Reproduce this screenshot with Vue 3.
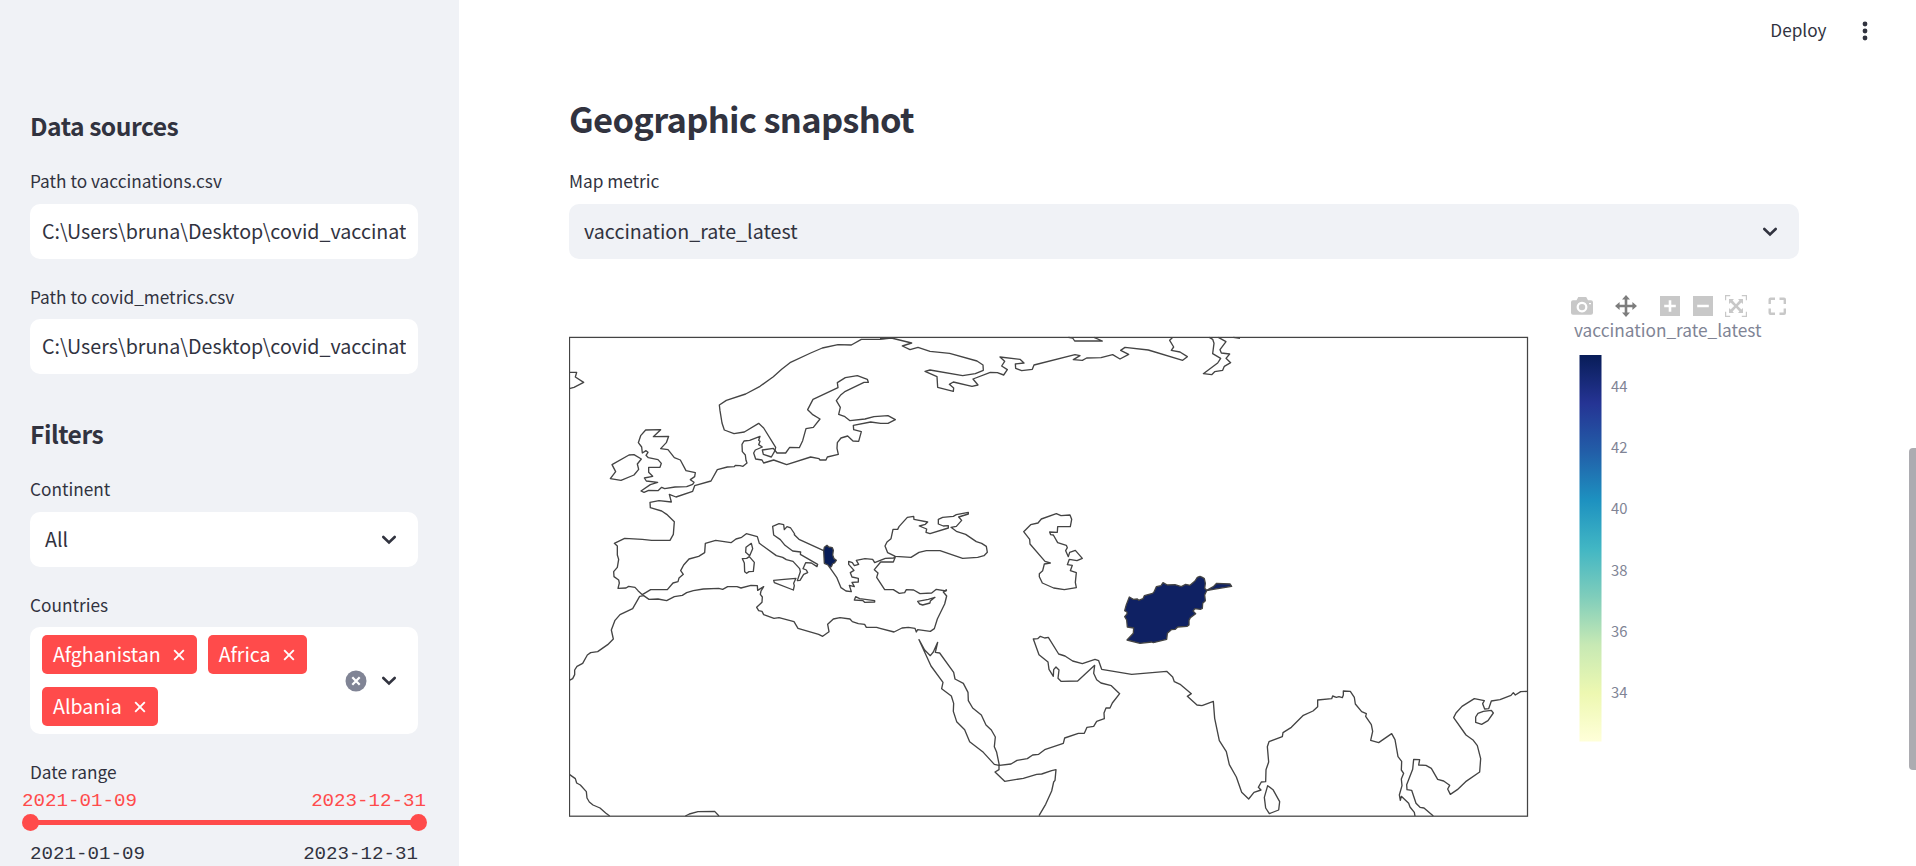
<script setup>
const countries = ['Afghanistan', 'Africa', 'Albania']
const ticks = [44, 42, 40, 38, 36, 34]
const stops = ['#081d58', '#253494', '#225ea8', '#1d91c0', '#41b6c4', '#7fcdbb', '#c7e9b4', '#edf8b1', '#ffffd9']

// Coastlines, grouped in map tiles; every tile has its own origin and a 3:1 grid.
const tiles = [
  { x: 560, y: 325, lines: [
    'M28 142L50 142 46 156 71 172 42 187 28 191',
    'M994 39L960 43 904 43 874 60 834 59 787 69 752 84 690 113 665 133 640 155 600 184 557 207 499 226 478 240 480 257 486 294 493 315 522 326 553 321 596 295 611 309 647 367 645 376 651 384 677 384 689 367 718 368 728 347 738 311 760 307 780 282 757 268 743 254 759 223 834 188 832 173 856 158 892 152 922 163 925 172 912 172 856 199 843 209 829 227 841 247 836 268 853 274 870 287 915 282 942 275 984 272 1006 284 984 295 962 295 932 291 880 301 881 314 904 320 896 349 879 348 863 333 843 339 832 353 831 370 835 388 802 396 798 405 780 405 777 401 752 396 680 419 641 405 611 414 606 405 587 402 581 384 586 375 607 366 596 359 600 349 596 346 600 334 569 346 552 348 546 358 547 380 556 390 558 406 561 414 549 424 540 422 526 421 523 425 502 426 472 434 453 468 404 482 398 499 348 516 328 508 334 531 297 527 270 532 271 548 305 558 320 568 343 590 340 628 330 646 275 646 247 643 194 640 163 655 172 663 172 690 176 703 172 727 161 740 162 755 176 765 178 774 174 790 198 789 206 784 225 787 234 797 247 809 272 794 322 794 339 774 354 770 357 759 370 748 362 737 371 720 387 702 416 694 434 683 436 655 467 646 513 653 528 642 545 637 559 626 592 635 598 655 649 692 668 697 679 704 699 709 719 731 721 740 712 767 720 766 731 748 743 743 739 735 729 731 737 713 754 714 771 725 773 718 721 688 722 681 698 678 675 661 661 644 641 630 638 604 657 596 671 599 673 614 681 605 692 609 704 627 703 629 717 643 791 677',
    'M809 727L830 757 843 788 858 798 874 800 868 781 883 785 876 772 895 771 895 760 876 756 871 743 882 736 866 718 866 709 877 713 883 722 896 718 889 706 915 701 938 703 944 713 976 700 1001 699 1006 694',
    'M1006 696L1000 711 962 711 943 734 954 744 950 757 974 794 1000 794 1018 805 1034 803 1039 794 1061 795 1080 806 1115 804 1129 793 1158 798 1160 794',
    'M257 315L302 314 280 335 326 334 319 353 302 371 324 374 343 398 361 405 378 437 406 443 404 455 391 464 402 472 398 478 380 485 345 486 314 491 305 487 294 497 266 496 252 502 243 498 271 479 293 472 259 468 253 459 278 454 266 442 266 427 300 427 304 415 294 404 265 398 258 391 264 382 258 377 247 384 245 366 235 353 242 332Z',
    'M207 390L222 389 244 402 232 417 236 433 222 450 183 466 151 461 167 440 156 419Z',
    'M607 375L640 370 645 377 634 396 610 388Z',
    'M574 655L578 671 569 692 557 682 558 667Z',
    'M568 695L583 712 580 739 567 740 560 745 554 740 553 714 547 701 560 700Z',
    'M641 766L672 763 708 760 701 775 703 782 700 795 643 773Z'
  ] },
  { x: 880, y: 325, lines: [
    'M0 41L34 39 95 54 67 63 90 74 114 67 150 79 209 85 291 108 309 120 310 136 286 146 248 152 150 135 135 139 171 155 173 187 220 199 221 189 208 178 220 171 276 184 294 180 279 162 331 142 352 143 371 150 382 134 365 123 374 109 360 96 420 103 432 114 406 117 407 130 425 137 457 133 462 120 585 89 600 92 580 104 607 106 620 99 663 98 698 89 720 102 746 88 722 76 735 67 805 75 908 106 922 95 900 81 874 76 881 66 869 46 877 38',
    'M565 37L578 39 584 48 667 48 642 37',
    'M46 694L23 683 15 663 21 651 33 641 39 613 53 613 57 605 82 577 101 574 102 583 143 591 136 598 118 603 140 612 138 622 150 626 205 609 205 602 190 603 175 597 175 583 188 577 220 574 229 569 265 562 265 567 236 576 245 586 229 604 213 607 229 619 257 628 289 650 305 655 319 664 322 682 312 692 293 697 248 700 180 677 139 677 117 682 93 697Z',
    'M529 566L543 572 570 570 575 583 571 605 533 605 532 622 509 621 512 629 520 630 533 653 559 661 562 668 557 677 565 695 569 682 586 676 607 700 591 707 568 703 562 719 577 721 571 737 589 743 586 772 589 788 553 794 521 789 487 774 478 755 478 746 488 737 493 717 511 714 495 709 450 657 449 643 431 620 452 599 474 594 484 582Z'
  ] },
  { x: 1200, y: 325, lines: [
    'M28 37L38 43 42 55 38 86 62 100 53 114 10 146 35 149 44 140 68 136 73 124 92 113 78 100 89 87 64 84 60 74 78 50 55 37',
    'M100 37L120 40'
  ] },
  { x: 560, y: 580, lines: [
    'M960 145L950 142 919 142 914 133 895 131 877 125 870 117 840 113 820 117 803 133 807 155 788 169 776 163 714 145 702 125 657 113 642 115 611 104 606 94 596 92 590 82 606 67 607 51 601 43 603 33 611 20 593 31 592 17 573 16 543 24 531 20 503 20 488 28 476 25 430 27 400 32 380 38 367 46 343 50 320 62 294 57 267 58 251 47 239 49 218 86 180 104 165 121 154 150 160 177 143 194 113 215 92 218 82 225 68 250 51 259 44 270 44 284 38 296 28 301',
    'M887 50L899 56 944 62 944 66 914 67 909 62 883 60Z',
    'M28 583L46 596 50 609 61 615 79 635 81 654 88 666 99 675 120 684 137 699 149 708',
    'M376 708L388 702 414 695 464 694 477 708'
  ] },
  { x: 880, y: 580, lines: [
    'M200 29L190 36 200 48 194 72 172 117 163 146 151 154 113 149 109 156 105 145 85 142 66 144 42 156 0 145',
    'M113 64L145 58 165 52 151 63 150 69 128 75 119 72Z',
    'M357 556L343 553 310 517 269 485 254 449 230 425 220 394 221 370 214 348 185 326 189 307 153 258 117 179 134 210 151 227 160 216 173 187 166 217 179 219 221 277 225 297 250 310 264 337 265 362 278 384 304 405 318 435 334 450 346 471 343 500 350 517 358 556 393 552 411 541 442 536 458 525 476 523 494 509 550 490 554 474 595 460 613 460 621 442 641 439 650 424 673 416 672 399 678 384 690 384 697 369 719 341 694 317 663 309 650 299 641 280 644 256 593 303 543 304 534 295 537 270 528 261 521 269 520 289 507 268 504 246 477 224 460 177 473 176 481 169 494 174 505 172 536 222 555 228 578 243 607 251 645 238 656 242 665 268 755 283 860 274 878 291 883 305 902 314 934 341 922 349 951 375 966 377',
    'M357 556L357 569 345 576 374 604 430 595 470 583 485 582 515 572 528 569 525 601 521 606 515 633 497 673 477 707'
  ] },
  { x: 1200, y: 580, lines: [
    'M6 377L40 364 44 415 58 482 79 515 88 554 109 591 125 637 146 657 162 637 183 630 175 622 184 606 197 605 198 569 206 546 202 500 207 485 247 470 249 458 274 442 310 406 339 393 353 380 353 360 395 356 398 348 409 352 417 350 427 353 430 345 430 333 451 334 463 352 466 372 485 395 499 401 497 409 514 434 518 454 512 481 536 488 575 461 585 479 594 530 605 544 604 570 611 580 604 597 606 617 598 645 601 661 604 649 626 670 630 681 643 697 645 708',
    'M700 708L672 684 660 682 648 670 635 631 621 629 620 614 638 568 641 538 659 539 656 555 678 556 694 565 713 598 731 603 749 616 743 627 751 643 772 629 797 605 839 576 842 536 832 497 820 481 798 465 761 413 768 399 786 379 823 356 853 362 848 371 854 387 866 386 874 363 900 359 933 346 940 338 946 345 962 335 982 334',
    'M850 394L874 391 880 399 864 422 845 433 827 427 827 411 834 400Z',
    'M203 617L219 629 239 665 236 690 208 701 197 684 193 652Z'
  ] }
]
</script>

<template>
  <div class="app">
    <aside class="sidebar">
      <h3>Data sources</h3>
      <label>Path to vaccinations.csv</label>
      <div class="field input"><span>C:\Users\bruna\Desktop\covid_vaccinat</span></div>
      <label class="gap short">Path to covid_metrics.csv</label>
      <div class="field input"><span>C:\Users\bruna\Desktop\covid_vaccinat</span></div>
      <h3 class="second">Filters</h3>
      <label>Continent</label>
      <div class="field select">
        <span>All</span>
        <svg class="chev" viewBox="0 0 20 20"><path d="M4.3 7l5.7 5.5L15.7 7" /></svg>
      </div>
      <label class="gap short">Countries</label>
      <div class="field multi">
        <div class="tags">
          <div v-for="c in countries" :key="c" class="tag">
            <span>{{ c }}</span>
            <svg viewBox="0 0 12 12"><path d="M1.2 1.2l9.6 9.6M10.8 1.2l-9.6 9.6" /></svg>
          </div>
        </div>
        <svg class="clear" viewBox="0 0 22 22"><circle cx="11" cy="11" r="10.5" /><path d="M7.3 7.3l7.4 7.4M14.7 7.3l-7.4 7.4" /></svg>
        <svg class="chev" viewBox="0 0 20 20"><path d="M4.3 7l5.7 5.5L15.7 7" /></svg>
      </div>
      <label class="gap range-label">Date range</label>
      <div class="dates current"><span>2021-01-09</span><span>2023-12-31</span></div>
      <div class="slider"><i></i><b></b><i></i></div>
      <div class="dates"><span>2021-01-09</span><span>2023-12-31</span></div>
    </aside>

    <main class="main">
      <header>
        <span>Deploy</span>
        <svg viewBox="0 0 6 20"><circle cx="3" cy="3" r="2.4" /><circle cx="3" cy="10" r="2.4" /><circle cx="3" cy="17" r="2.4" /></svg>
      </header>
      <section class="content">
        <h2>Geographic snapshot</h2>
        <label>Map metric</label>
        <div class="field select grey">
          <span>vaccination_rate_latest</span>
          <svg class="chev" viewBox="0 0 20 20"><path d="M4.3 7l5.7 5.5L15.7 7" /></svg>
        </div>
        <div class="modebar">
          <svg viewBox="0 0 22 22"><path fill-rule="evenodd" d="M2 5.3h3.5L7.3 2h7.9l1.8 3.3h3q2 0 2 2v10.4q0 2-2 2H2q-2 0-2-2V7.3q0-2 2-2zM11 6.7a5.4 5.4 0 1 0 .01 0zM18 8v1.2h2V8z" /><circle cx="11" cy="12.1" r="3.2" /></svg>
          <svg class="active" viewBox="0 0 22 22"><path d="M11 0l4 4.6h-2.700v5.100h5.100V7L22 11l-4.600 4v-2.700h-5.100v5.100H15L11 22l-4-4.600h2.700v-5.100H4.600V15L0 11l4.600-4v2.700h5.100V4.600H7z" /></svg>
          <svg viewBox="0 0 22 22"><path fill-rule="evenodd" d="M1 1h20v20H1zM9.7 5.3v4.4H5.2v2.6h4.5v4.4h2.6v-4.4h4.5V9.7h-4.5V5.3z" /></svg>
          <svg viewBox="0 0 22 22"><path fill-rule="evenodd" d="M1 1h20v20H1zM5.2 9.7v2.6h11.6V9.7z" /></svg>
          <svg viewBox="0 0 22 22"><path d="M0 0h5.2v1.2H1.2v4H0zM16.8 0H22v5.2h-1.2v-4h-4zM0 16.8h1.2v4h4V22H0zM20.8 16.8H22V22h-5.2v-1.2h4zM4 4h5L7.6 5.600l3.400 3.600 3.400-3.600L13 4h5v5l-1.600-1.400L12.800 11l3.600 3.400L18 13v5h-5l1.400-1.600L11 12.800l-3.400 3.600L9 18H4v-5l1.600 1.400L9.200 11 5.600 7.600 4 9z" /></svg>
          <svg class="full" viewBox="0 0 22 22"><path d="M3.700 9V4.500q0-.8.8-.8H9M13.500 3.700H18q.8 0 .8.8V9M18.800 13.500V18q0 .8-.8.8h-4.500M9 18.800H4.500q-.8 0-.8-.8v-4.500" /></svg>
        </div>
        <svg class="chart" viewBox="569 317 1230 549">
          <defs>
            <linearGradient id="scale" x1="0" y1="0" x2="0" y2="1">
              <stop v-for="(c, i) in stops" :key="c" :offset="i / 8" :stop-color="c" />
            </linearGradient>
          </defs>
          <g v-for="t in tiles" :key="t.x + '-' + t.y" class="coast" :transform="`translate(${t.x} ${t.y}) scale(.33333)`">
            <path v-for="(d, i) in t.lines" :key="i" :d="d" />
          </g>
          <g class="coast country" transform="translate(880 580) scale(.33333)">
            <path d="M748 51L760 58 772 57 776 61 789 56 793 47 818 40 823 34 829 20 843 17 849 8 862 15 885 14 904 20 917 13 930 16 945 3 952 -8 960 -11 967 -8 973 -4 976 10 974 25 980 31 1000 20 1010 10 1050 12 1055 19 1000 28 980 32 974 45 976 62 968 70 967 85 961 88 945 86 939 93 947 101 931 113 927 121 927 135 921 139 893 141 886 148 874 149 862 160 860 178 820 188 815 186 780 190 741 180 760 160 761 144 742 141 740 120 734 110 741 102 741 96 734 92 739 74Z" />
          </g>
          <g class="coast country" transform="translate(560 325) scale(.33333)">
            <path class="dark" d="M791 677L793 667 801 661 806 666 817 668 820 676 818 690 822 701 829 706 823 714 818 716 814 725 809 727 804 720 793 715Z" />
          </g>
          <rect class="frame" x="569.5" y="337.400" width="958" height="478.800" />
          <text class="legend" x="1574" y="337" textLength="187.500">vaccination_rate_latest</text>
          <rect x="1579.500" y="355" width="22" height="386.500" fill="url(#scale)" />
          <text v-for="(n, i) in ticks" :key="n" class="tick" x="1611" :y="392 + i * 61.200" textLength="16.500">{{ n }}</text>
        </svg>
      </section>
      <div class="scroll"></div>
    </main>
  </div>
</template>

<style>
html, body { overflow: hidden; }
</style>

<style scoped>
* { box-sizing: border-box; }
.app { display: flex; width: 1916px; height: 866px; overflow: hidden; background: #fff; color: #31333f; font-family: "Noto Sans CJK SC", "Noto Sans", sans-serif; font-size: 19.65px; }
.sidebar { width: 459px; height: 866px; flex: none; background: #f0f2f6; padding: 107px 41px 0 30px; overflow: hidden; }
h2, h3 { margin: 0; font-weight: 700; white-space: nowrap; }
h3 { font-size: 24.65px; line-height: 36px; height: 36px; letter-spacing: -.5px; }
h3.second { margin-top: 41px; margin-bottom: 26px; }
label { display: block; height: 24px; line-height: 24px; margin: 26px 0 11px; font-size: 17.250px; }
label.gap { margin-top: 26px; }
label.short { margin-bottom: 10px; }
label.range-label { margin-bottom: 5px; }
.field { height: 55px; border-radius: 10px; background: #fff; display: flex; align-items: center; white-space: nowrap; }
.input { padding: 0 12px; }
.input span { overflow: hidden; flex: 1; }
.input span, .select span, .tag span { padding-bottom: 2px; }
.select { padding: 0 19px 0 15px; justify-content: space-between; }
.grey { background: #f0f2f6; }
.chev { width: 20px; height: 20px; fill: none; stroke: #31333f; stroke-width: 2.600; stroke-linecap: round; flex: none; }
.multi { height: 107px; padding: 0 19px 0 12px; }
.tags { flex: 1; display: flex; flex-wrap: wrap; gap: 13px 11px; }
.tag { height: 39px; border-radius: 5px; background: #ff4b4b; color: #fff; display: flex; align-items: center; gap: 12.500px; padding: 0 11.500px 0 11px; }
.tag span { font-size: 19.600px; }
.tag svg { width: 12px; height: 12px; stroke: #fff; stroke-width: 1.900; }
.clear { width: 22px; height: 22px; margin-right: 12px; fill: #808495; }
.clear path { stroke: #fff; stroke-width: 2.200; }
.dates { display: flex; justify-content: space-between; height: 22px; line-height: 22px; font-family: "Liberation Mono", monospace; font-size: 19.150px; }
.current { color: #ff4b4b; margin: 0 -8px; height: 24px; line-height: 24px; }
.slider { display: flex; align-items: center; height: 17px; margin: 1px -9px 12px -8px; }
.slider i { width: 17px; height: 17px; border-radius: 50%; background: #ff4b4b; }
.slider b { flex: 1; height: 5px; margin: 0 -2px; background: #ff4b4b; }
.main { flex: 1; position: relative; }
header { height: 62px; display: flex; justify-content: flex-end; align-items: center; gap: 35px; padding-right: 48.500px; font-size: 17.200px; }
header span { padding-bottom: 3px; }
header svg { width: 6px; height: 20px; fill: #31333f; }
.content { width: 1230px; margin-left: 110px; padding-top: 32px; }
h2 { font-size: 34.5px; line-height: 48px; height: 48px; letter-spacing: -.7px; margin-bottom: 27px; }
.modebar { display: flex; width: 218px; height: 22px; margin: 36px 0 0 1002px; }
.modebar svg { width: 22px; height: 22px; flex: none; fill: #c8c8c8; margin-right: 11px; }
.modebar svg:nth-child(1) { margin-right: 22px; }
.modebar svg.active { fill: #7d7d7d; margin-right: 22px; }
.modebar svg:nth-child(5) { margin: 0 19px 0 0; }
.modebar svg.full { fill: none; stroke: #c8c8c8; stroke-width: 2.400; margin: 0; }
.chart { display: block; width: 1230px; height: 549px; }
.coast { fill: none; stroke: #444; stroke-width: 4; stroke-linejoin: round; }
.country { fill: #0f2163; }
.dark { fill: #081d58; }
.frame { fill: none; stroke: #444; stroke-width: 1.250; }
.legend { font-size: 17.250px; fill: #808495; }
.tick { font-size: 14.800px; fill: #808495; }
.scroll { position: absolute; right: 0; top: 448px; width: 7px; height: 322px; border-radius: 4px 0 0 4px; background: #acacb1; }
</style>
